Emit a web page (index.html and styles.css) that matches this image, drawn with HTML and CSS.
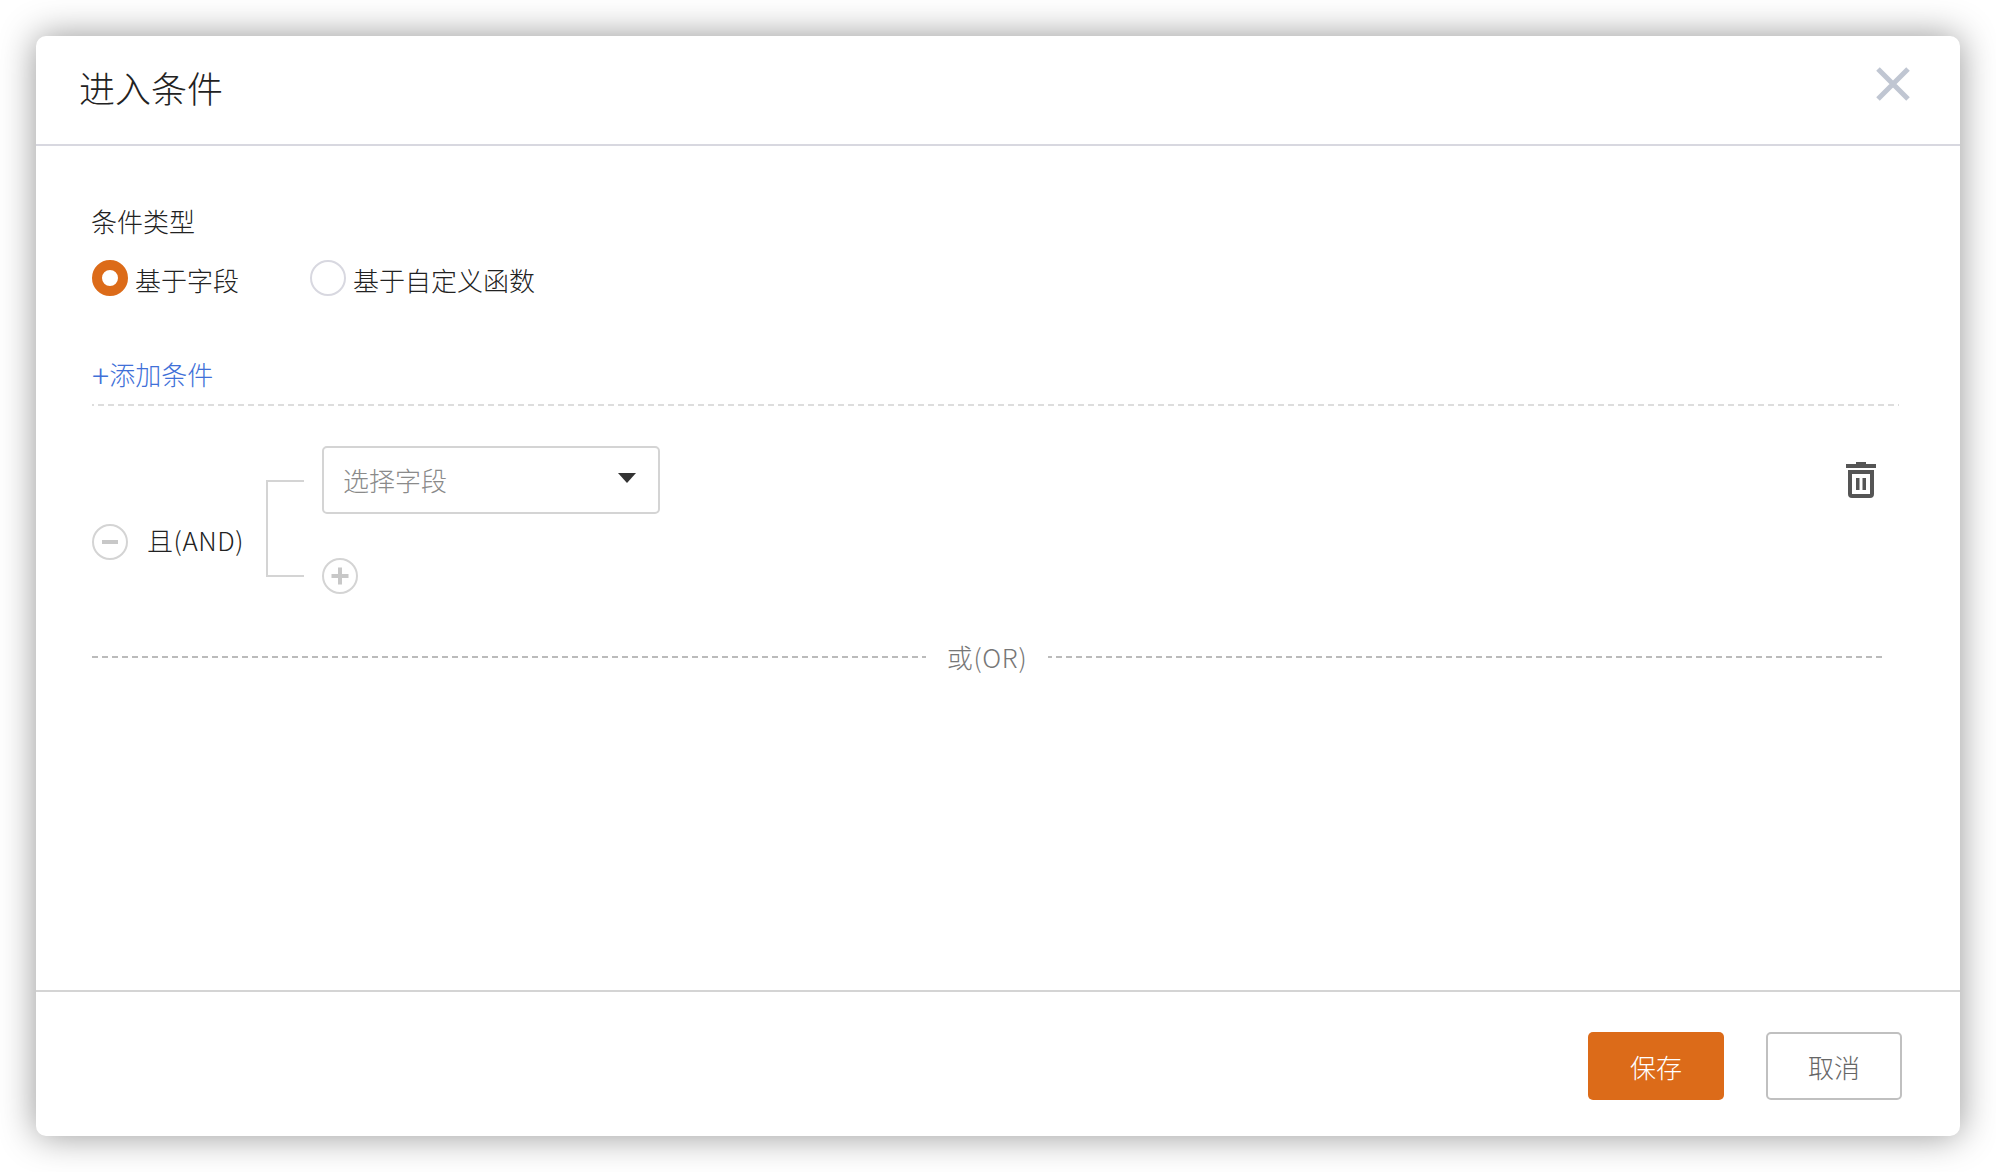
FILE: index.html
```html
<!DOCTYPE html>
<html lang="zh-CN">
<head>
<meta charset="utf-8">
<title>进入条件</title>
<link rel="stylesheet" href="styles.css">
</head>
<body>
<div class="modal">
  <header class="modal-header">
    <h1 class="modal-title">进入条件</h1>
    <svg class="close-icon" width="34" height="34" viewBox="0 0 34 34"><path d="M2 2 32 32M32 2 2 32" stroke="#c0c6d2" stroke-width="5" fill="none"/></svg>
  </header>
  <main class="modal-body">
    <div class="field-label">条件类型</div>
    <div class="radio-group">
      <label class="radio-item"><span class="radio radio-on"></span><span class="radio-text">基于字段</span></label>
      <label class="radio-item"><span class="radio"></span><span class="radio-text">基于自定义函数</span></label>
    </div>
    <a class="add-link"><span class="add-plus">+</span>添加条件</a>
    <div class="condition">
      <span class="round-btn round-minus">
        <svg width="32" height="32" viewBox="0 0 32 32"><rect x="8" y="14" width="16" height="4" fill="#c8c8c8"/></svg>
      </span>
      <span class="and-label">且(AND)</span>
      <span class="bracket"></span>
      <div class="fields">
        <div class="select">
          <span class="placeholder">选择字段</span>
          <svg class="caret" width="18" height="10" viewBox="0 0 18 10"><path d="M0 0H18L9 10Z" fill="#333"/></svg>
        </div>
        <span class="round-btn">
          <svg width="32" height="32" viewBox="0 0 32 32"><path d="M7.500 14H14V7.500H18V14H24.500V18H18V24.500H14V18H7.500Z" fill="#c8c8c8"/></svg>
        </span>
      </div>
      <svg class="trash" width="30" height="36" viewBox="0 0 30 36"><path fill="#555" fill-rule="evenodd" d="M10 0H20V2H30V6H0V2H10ZM2 8H28V32A4 4 0 0 1 24 36H6A4 4 0 0 1 2 32ZM6 12V32H24V12ZM10 16H13.500V28H10ZM16.500 16H20V28H16.500Z"/></svg>
    </div>
    <div class="or-row">
      <span class="or-line"></span>
      <span class="or-text">或(OR)</span>
      <span class="or-line or-line-end"></span>
    </div>
  </main>
  <footer class="modal-footer">
    <button class="btn btn-primary">保存</button>
    <button class="btn btn-default">取消</button>
  </footer>
</div>
</body>
</html>
```
FILE: styles.css
```css
* { box-sizing: border-box; }
html, body { margin: 0; height: 100%; }
body {
  padding: 36px;
  background: #fff;
  font-family: "Noto Sans CJK SC", "Noto Sans", sans-serif;
  font-size: 26px;
  font-weight: 300;
  color: #222;
  overflow: hidden;
}
.modal {
  width: 1924px;
  height: 1100px;
  background: #fff;
  border-radius: 10px;
  box-shadow: 0 0 36px rgba(0, 0, 0, .42);
  display: flex;
  flex-direction: column;
}
.modal-header {
  height: 110px;
  flex: none;
  border-bottom: 2px solid #d8d8e0;
  display: flex;
  justify-content: space-between;
  align-items: flex-start;
  padding: 0 50px 0 43px;
}
.modal-title {
  margin: 29px 0 0;
  font-size: 36px;
  line-height: 44px;
  font-weight: 300;
}
.close-icon { margin-top: 31px; }
.modal-body {
  flex: 1;
  padding: 57px 0 0 56px;
}
.field-label { line-height: 36px; margin-left: -1px; }
.radio-group {
  display: flex;
  margin-top: 21px;
  gap: 71px;
}
.radio-item {
  display: flex;
  align-items: center;
  gap: 7px;
  line-height: 36px;
}
.radio-text { height: 36px; line-height: 39px; }
.radio {
  width: 36px;
  height: 36px;
  border-radius: 50%;
  border: 2px solid #d8d8e0;
}
.radio-on { border: 10px solid #dc6b19; }
.add-link {
  display: flex;
  align-items: flex-start;
  width: 1807px;
  height: 50px;
  margin-top: 60px;
  line-height: 36px;
  color: #4070d8;
  background: repeating-linear-gradient(90deg, #ddd 0 2px, transparent 2px 6px, #ddd 6px 10px) bottom left / 100% 2px no-repeat;
}
.add-plus { font-size: 32px; line-height: 36px; }
.condition {
  display: flex;
  align-items: flex-start;
  width: 1784px;
  margin-top: 40px;
}
.round-btn {
  width: 36px;
  height: 36px;
  flex: none;
  border-radius: 50%;
  border: 2px solid #d4d4d4;
  display: block;
}
.round-btn svg { display: block; }
.round-minus { margin-top: 78px; }
.and-label {
  width: 119px;
  flex: none;
  margin: 76px 0 0 19px;
  line-height: 36px;
  letter-spacing: .6px;
}
.bracket {
  width: 38px;
  height: 97px;
  margin: 34px 18px 0 0;
  border: 2px solid #d4d4d4;
  border-right: 0;
  flex: none;
}
.fields {
  display: flex;
  flex-direction: column;
  gap: 44px;
}
.select {
  width: 338px;
  height: 68px;
  border: 2px solid #d4d4d4;
  border-radius: 5px;
  display: flex;
  align-items: center;
  justify-content: space-between;
  padding: 0 22px 0 19px;
}
.placeholder { color: #8a8a8a; line-height: 36px; }
.caret { margin-top: -5px; }
.trash { margin: 16px 0 0 auto; }
.or-row {
  display: flex;
  align-items: center;
  width: 1790px;
  margin-top: 45px;
}
.or-line {
  flex: 1;
  height: 2px;
  background: repeating-linear-gradient(90deg, #bbb 0 6px, transparent 6px 10px);
}
.or-line-end {
  background: repeating-linear-gradient(270deg, #bbb 0 6px, transparent 6px 10px);
}
.or-text {
  width: 122px;
  flex: none;
  text-align: center;
  line-height: 36px;
  color: #777;
  letter-spacing: .7px;
}
.modal-footer {
  height: 146px;
  flex: none;
  border-top: 2px solid #d4d4d4;
  display: flex;
  justify-content: flex-end;
  gap: 42px;
  padding: 40px 58px 0 0;
}
.btn {
  width: 136px;
  height: 68px;
  border-radius: 5px;
  font: inherit;
  padding: 0;
}
.btn-primary { background: #dc6b19; border: 0; color: #fff; }
.btn-default { background: #fff; border: 2px solid #c0c0c0; color: #666; }
```
